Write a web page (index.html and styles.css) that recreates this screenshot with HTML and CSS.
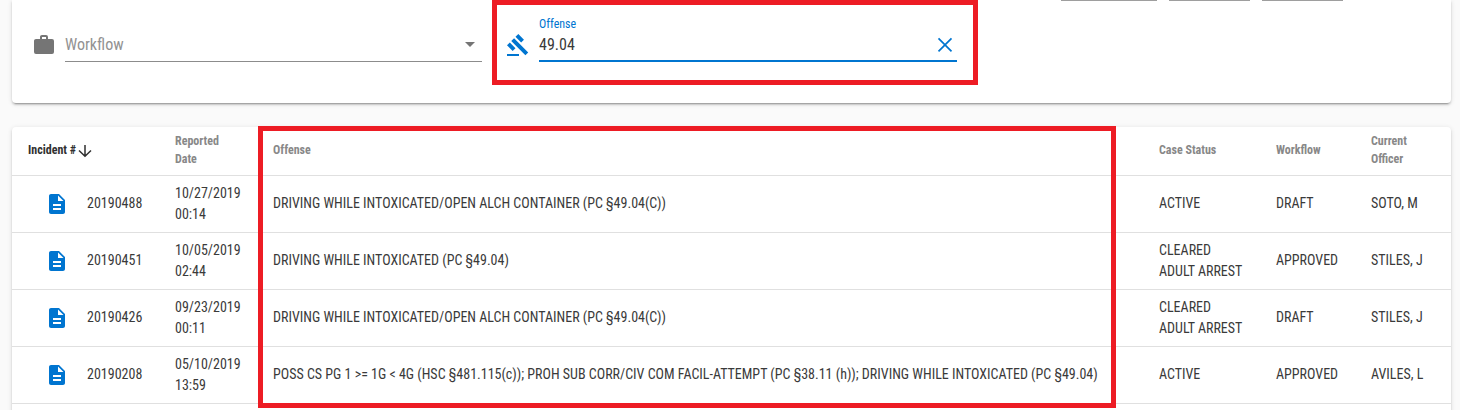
FILE: index.html
```html
<!DOCTYPE html>
<html lang="en">
<head>
<meta charset="utf-8">
<title>Incidents</title>
<link rel="stylesheet" href="styles.css">
</head>
<body>
<svg class="sprite" aria-hidden="true">
  <symbol id="doc" viewBox="0 0 24 24"><path d="M14 2H6c-1.100 0-2 .9-2 2v16c0 1.100.9 2 2 2h12c1.100 0 2-.9 2-2V8l-6-6zm2 16H8v-2h8v2zm0-4H8v-2h8v2zm-3-5V3.500L18.500 9H13z"/></symbol>
</svg>
<main class="page">
  <section class="card filters">
    <div class="chips"><span class="chip wide"></span><span class="chip"></span><span class="chip"></span></div>
    <div class="fields">
      <div class="field workflow">
        <svg class="icon" viewBox="0 0 24 24"><path d="M10 2h4a2 2 0 0 1 2 2v2h4a2 2 0 0 1 2 2v11a2 2 0 0 1-2 2H4a2 2 0 0 1-2-2V8c0-1.110.89-2 2-2h4V4c0-1.110.89-2 2-2m4 4V4h-4v2h4z"/></svg>
        <div class="control">
          <span class="placeholder">Workflow</span>
          <svg class="caret" viewBox="0 0 24 24"><path d="M7 10l5 5 5-5H7z"/></svg>
        </div>
      </div>
      <div class="field offense">
        <svg class="icon" viewBox="0 0 24 24"><path d="M1 21h12v2H1zM5.245 8.070l2.830-2.827 14.140 14.142-2.828 2.828zM12.317 1l5.657 5.656-2.830 2.830-5.654-5.660zM3.825 9.485l5.657 5.657-2.828 2.828-5.657-5.657z"/></svg>
        <div class="control active">
          <span class="label">Offense</span>
          <span class="value">49.04</span>
          <svg class="clear" viewBox="0 0 24 24"><path d="M5.500 6.300l13 13M18.500 6.300l-13 13"/></svg>
        </div>
      </div>
    </div>
  </section>
  <section class="card table">
    <div class="row head">
      <div class="sorted"><span>Incident #</span><svg class="arrow" viewBox="0 0 14 14"><path d="M7 1v11M1 6.500L7 12.300 13 6.500"/></svg></div>
      <div>Reported<br>Date</div><div>Offense</div><div>Case Status</div><div>Workflow</div><div>Current<br>Officer</div>
    </div>
    <div class="row"><div class="incident"><svg class="doc"><use href="#doc"/></svg><span class="single">20190488</span></div><div>10/27/2019<br>00:14</div><div class="single">DRIVING WHILE INTOXICATED/OPEN ALCH CONTAINER (PC §49.04(C))</div><div class="single">ACTIVE</div><div class="single">DRAFT</div><div class="single">SOTO, M</div></div>
    <div class="row"><div class="incident"><svg class="doc"><use href="#doc"/></svg><span class="single">20190451</span></div><div>10/05/2019<br>02:44</div><div class="single">DRIVING WHILE INTOXICATED (PC §49.04)</div><div>CLEARED<br>ADULT ARREST</div><div class="single">APPROVED</div><div class="single">STILES, J</div></div>
    <div class="row"><div class="incident"><svg class="doc"><use href="#doc"/></svg><span class="single">20190426</span></div><div>09/23/2019<br>00:11</div><div class="single">DRIVING WHILE INTOXICATED/OPEN ALCH CONTAINER (PC §49.04(C))</div><div>CLEARED<br>ADULT ARREST</div><div class="single">DRAFT</div><div class="single">STILES, J</div></div>
    <div class="row"><div class="incident"><svg class="doc"><use href="#doc"/></svg><span class="single">20190208</span></div><div>05/10/2019<br>13:59</div><div class="single">POSS CS PG 1 &gt;= 1G &lt; 4G (HSC §481.115(c)); PROH SUB CORR/CIV COM FACIL-ATTEMPT (PC §38.11 (h)); DRIVING WHILE INTOXICATED (PC §49.04)</div><div class="single">ACTIVE</div><div class="single">APPROVED</div><div class="single">AVILES, L</div></div>
  </section>
</main>
<div class="highlight filter-highlight"></div>
<div class="highlight column-highlight"></div>
</body>
</html>
```
FILE: styles.css
```css
* { box-sizing: border-box; }
body { margin: 0; height: 410px; overflow: hidden; background: #fafafa; color: #3a3a3a; font-family: "Roboto Condensed", Roboto, sans-serif; font-stretch: 75%; font-size: 14px; line-height: 21px; }
svg { display: block; flex: none; fill: currentColor; }
.sprite { position: absolute; width: 0; height: 0; }
.page { display: flex; flex-direction: column; gap: 24px; height: 410px; padding: 0 9px 0 12px; overflow: hidden; white-space: nowrap; }
.card { flex: none; background: #fff; box-shadow: 0 3px 1px -2px rgba(0,0,0,.2), 0 2px 2px rgba(0,0,0,.14), 0 1px 5px rgba(0,0,0,.12); }
.filters { height: 103px; border-radius: 0 0 4px 4px; }
.chips { display: flex; gap: 12px; height: 1px; padding-left: 1049px; }
.chip { width: 81px; background: #9e9e9e; }
.wide { width: 96px; }
.fields { display: flex; gap: 24px; padding: 15px 0 0 20px; }
.field { display: flex; gap: 9px; align-items: flex-start; color: #757575; }
.field .icon { width: 24px; height: 24px; margin-top: 17px; }
.control { display: flex; align-items: center; justify-content: space-between; width: 417px; height: 46px; padding: 10px 0 0; border-bottom: 1px solid #8c8c8c; font-size: 16px; }
.placeholder { padding-top: 2px; color: #929292; }
.caret { width: 24px; height: 24px; }
.offense { color: #0075d0; }
.active { display: grid; grid-template-columns: 1fr 24px; grid-template-rows: 16px 28px; align-content: start; align-items: start; width: 418px; padding: 0; border-bottom: 2px solid #0075d0; }
.label { grid-column: 1 / 3; font-size: 12px; line-height: 16px; }
.value { padding-top: 2px; color: #3a3a3a; }
.clear { width: 24px; height: 24px; stroke: currentColor; stroke-width: 1.700; }
.table { height: 320px; border-radius: 4px; }
.row { display: grid; grid-template-columns: 163px 98px 886px 117px 95px 80px; align-items: center; height: 57px; border-bottom: 1px solid #e0e0e0; }
.single { padding-bottom: 1px; }
.head { height: 49px; padding-bottom: 2px; font-size: 12px; line-height: 18px; font-weight: 700; color: #888; }
.sorted { display: flex; align-items: center; gap: 2px; padding-left: 16px; color: #303030; }
.arrow { width: 14px; height: 14px; margin-top: 2px; fill: none; stroke: currentColor; stroke-width: 1.500; }
.incident { display: flex; align-items: center; gap: 18px; padding-left: 33px; }
.doc { width: 24px; height: 24px; color: #0075d0; }
.highlight { position: absolute; border: 5px solid #ed1c24; }
.filter-highlight { left: 492px; top: 0; width: 486px; height: 85px; }
.column-highlight { left: 258px; top: 126px; width: 858px; height: 282px; }
```
